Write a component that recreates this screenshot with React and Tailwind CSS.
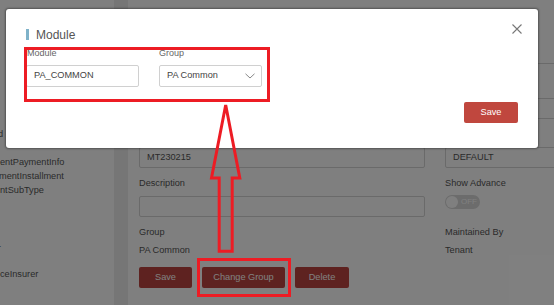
import React from "react";

const font = { fontFamily: '"Liberation Sans", Arial, sans-serif' };

function Field({ label, value, children }) {
  return (
    <div className="flex flex-col">
      <div className="h-[14px] leading-[14px] text-[9.2px] text-[#555]">{label}</div>
      {children ? (
        children
      ) : (
        <div className="mt-[6px] h-[21px] border border-[#d4d4d4] rounded-[2px] px-[7px] flex items-center text-[9.2px] text-[#555]">
          {value}
        </div>
      )}
    </div>
  );
}

function Background() {
  const sideItems = [
    { t: "d", ml: "-ml-[2px]" },
    { t: "", ml: "" },
    { t: "entPaymentInfo", ml: "" },
    { t: "mentInstallment", ml: "-ml-[1px]" },
    { t: "ntSubType", ml: "" },
    { t: "", ml: "" },
    { t: "", ml: "" },
    { t: "", ml: "" },
    { t: "-", ml: "-ml-[2px]" },
    { t: "", ml: "" },
    { t: "ceInsurer", ml: "" },
  ];
  return (
    <div className="flex h-full w-full bg-white">
      <div className="w-[114px] shrink-0 overflow-hidden pt-[127px]">
        {sideItems.map((s, i) => (
          <div key={i} className={`h-[14px] leading-[14px] text-[9.2px] text-[#555] whitespace-nowrap ${s.ml}`}>
            {s.t}
          </div>
        ))}
      </div>
      <div className="w-[14px] shrink-0 bg-[#ececec]" />
      <div className="flex-1 pl-[11px] overflow-hidden">
        <div className="h-[64px] border-b border-[#d4d4d4] -ml-[11px] w-[600px]" />
        <div className="grid grid-cols-[286px_150px] gap-x-[20px] gap-y-[8px] pt-[14px]">
          <Field label="Name" value="PA Common" />
          <Field label="Type" value="" />
          <Field label="Module Code" value="MT230215" />
          <Field label="Tenant Code" value="DEFAULT" />
          <Field label="Description" value="" />
          <Field label="Show Advance">
            <div className="mt-[5px] w-[35px] h-[14px] rounded-full bg-[#d8d8d8] flex items-center pl-[1px] relative">
              <div className="w-[12px] h-[12px] rounded-full bg-white" />
              <span className="ml-[3px] text-[8px] leading-none text-white">OFF</span>
            </div>
          </Field>
          <div className="flex flex-col">
            <div className="h-[14px] leading-[14px] text-[9.2px] text-[#555]">Group</div>
            <div className="mt-[4px] h-[14px] leading-[14px] text-[9.2px] text-[#555]">PA Common</div>
          </div>
          <div className="flex flex-col">
            <div className="h-[14px] leading-[14px] text-[9.2px] text-[#555]">Maintained By</div>
            <div className="mt-[4px] h-[14px] leading-[14px] text-[9.2px] text-[#555]">Tenant</div>
          </div>
        </div>
        <div className="flex gap-[10px] mt-[10px]">
          <button className="w-[53px] h-[21px] bg-[#bd4540] text-white text-[9.2px] rounded-[2px]">Save</button>
          <button className="w-[83px] h-[21px] bg-[#bd4540] text-white text-[9.2px] rounded-[2px]">Change Group</button>
          <button className="w-[54px] h-[21px] bg-[#bd4540] text-white text-[9.2px] rounded-[2px]">Delete</button>
        </div>
      </div>
    </div>
  );
}

function Modal() {
  return (
    <div className="absolute left-[6px] top-[9px] w-[532px] h-[139px] bg-white rounded-[3px] shadow-[0_0_2px_1px_rgba(0,0,0,0.35)] px-[20px] pt-[20px] flex flex-col">
      <div className="flex items-center h-[11px]">
        <div className="w-[3px] h-[11px] bg-[#7fb2c9]" />
        <div className="ml-[7px] text-[12px] leading-none text-[#555]">Module</div>
      </div>
      <button className="absolute right-[16px] top-[15px] w-[10px] h-[10px]">
        <svg width="10" height="10" viewBox="0 0 10 10">
          <path d="M0.5 0.5 L9.5 9.5 M9.5 0.5 L0.5 9.5" stroke="#777" strokeWidth="1.1" fill="none" />
        </svg>
      </button>
      <div className="flex gap-[20px] mt-[7px]">
        <div className="w-[113px] flex flex-col">
          <div className="h-[13px] leading-[13px] text-[9px] text-[#666] pl-[1px]">Module</div>
          <div className="mt-[5px] h-[22px] border border-[#d0d0d0] rounded-[2px] px-[7px] flex items-center text-[9.2px] text-[#444]">
            PA_COMMON
          </div>
        </div>
        <div className="w-[103px] flex flex-col">
          <div className="h-[13px] leading-[13px] text-[9px] text-[#666]">Group</div>
          <div className="mt-[5px] h-[22px] border border-[#d0d0d0] rounded-[2px] pl-[7px] pr-[6px] flex items-center justify-between text-[9.2px] text-[#444]">
            <span>PA Common</span>
            <svg width="10" height="6" viewBox="0 0 10 6">
              <path d="M0.5 0.8 L5 5 L9.5 0.8" stroke="#888" strokeWidth="1" fill="none" />
            </svg>
          </div>
        </div>
      </div>
      <div className="flex justify-end mt-[15px]">
        <button className="w-[54px] h-[21px] bg-[#c0473e] text-white text-[9.2px] rounded-[2px]">Save</button>
      </div>
    </div>
  );
}

export default function App() {
  return (
    <div className="relative w-[554px] h-[305px] overflow-hidden" style={font}>
      <Background />
      <div className="absolute inset-0 bg-black/50" />
      <Modal />
      <div className="absolute left-[24px] top-[47px] w-[246px] h-[55px] border-[3px] border-[#ed1c24]" />
      <div className="absolute left-[197px] top-[258px] w-[94px] h-[39px] border-[3px] border-[#ed1c24]" />
      <svg className="absolute left-0 top-0" width="554" height="305" viewBox="0 0 554 305">
        <polygon
          points="225.7,105 211.5,178 219.2,178 219.2,251.2 232.2,251.2 232.2,178 239.8,178"
          fill="none"
          stroke="#ed1c24"
          strokeWidth="3"
          strokeLinejoin="miter"
        />
      </svg>
    </div>
  );
}
